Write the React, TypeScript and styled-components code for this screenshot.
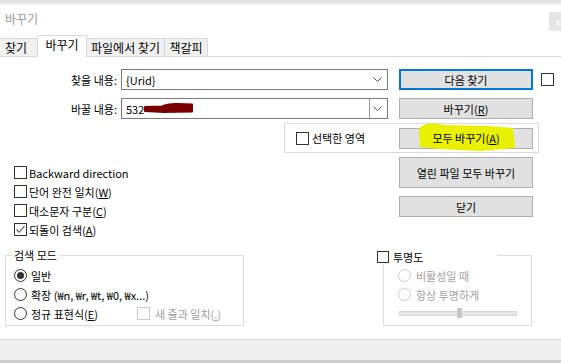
import * as React from 'react';
import styled, { createGlobalStyle } from 'styled-components';

const GlobalStyle = createGlobalStyle`
	html, body {
		margin: 0;
		padding: 0;
		background: #fff;
	}
	body {
		font-family: "Noto Sans CJK KR", "Noto Sans", sans-serif;
		font-size: 11px;
		color: #000;
	}
	* {
		box-sizing: border-box;
	}
`;

const Check: React.FunctionComponent<{ checked?: boolean; disabled?: boolean; size?: number }> = ({ checked, disabled, size = 13 }) => (
	<Box $disabled={disabled} $size={size}>
		{checked && (
			<svg width="11" height="11" viewBox="0 0 11 11">
				<polyline points="1.5,5.5 4.2,8.3 9.5,2.2" fill="none" stroke="#555" strokeWidth="1.1" />
			</svg>
		)}
	</Box>
);

const Radio: React.FunctionComponent<{ checked?: boolean; disabled?: boolean }> = ({ checked, disabled }) => (
	<Circle $disabled={disabled}>{checked && <Dot />}</Circle>
);

const Chevron = () => (
	<svg width="9" height="5" viewBox="0 0 9 5">
		<polyline points="0.5,0.5 4.5,4.5 8.5,0.5" fill="none" stroke="#555" strokeWidth="1" />
	</svg>
);

export default function App() {
	return (
		<>
			<GlobalStyle />
			<Window>
				<TopEdge />
				<TitleBar>
					<Title>바꾸기</Title>
					<CloseBox>x</CloseBox>
				</TitleBar>

				<TabStrip>
					<Tab $width={44} $first>찾기</Tab>
					<Tab $width={50} $active>바꾸기</Tab>
					<Tab $width={79}>파일에서 찾기</Tab>
					<Tab $width={44}>책갈피</Tab>
				</TabStrip>

				<FieldRow $top={12}>
					<FieldLabel>찾을 내용:</FieldLabel>
					<Combo>
						<ComboText>{'{Urid}'}</ComboText>
						<ComboArrow><Chevron /></ComboArrow>
					</Combo>
					<ActionButton $height={21} $primary>다음 찾기</ActionButton>
					<SideCheck><Check /></SideCheck>
				</FieldRow>

				<FieldRow $top={8}>
					<FieldLabel>바꿀 내용:</FieldLabel>
					<Combo>
						<ComboText>
							532
							<Redaction width="50" height="12" viewBox="0 0 50 12">
								<path
									d="M1 5 L18 4.5 Q24 1.5 34 2 L48 2.5 L48 9.5 L20 10 L1 9 Z"
									fill="#7a0000"
									stroke="#7a0000"
									strokeWidth="2"
									strokeLinejoin="round"
								/>
							</Redaction>
						</ComboText>
						<ComboArrow $split><Chevron /></ComboArrow>
					</Combo>
					<ActionButton $height={21}>바꾸기(<u>R</u>)</ActionButton>
				</FieldRow>

				<SelectionGroup>
					<CheckRow $gap={3}>
						<Check />
						<span>선택한 영역</span>
					</CheckRow>
					<ActionButton $height={21}>
						<Highlight width="98" height="29" viewBox="0 0 98 29">
							<path d="M1 7 C3 1, 12 -1, 24 2 L70 3 L95 5 L97 25 L62 28 L22 26 L2 24 Z" fill="#e9f000" />
						</Highlight>
						<ButtonLabel>모두 바꾸기(<u>A</u>)</ButtonLabel>
					</ActionButton>
				</SelectionGroup>

				<Middle>
					<OptionList>
						<CheckRow $gap={2}>
							<Check />
							<span>Backward direction</span>
						</CheckRow>
						<CheckRow $gap={2}>
							<Check />
							<span>단어 완전 일치(<u>W</u>)</span>
						</CheckRow>
						<CheckRow $gap={2}>
							<Check />
							<span>대소문자 구분(<u>C</u>)</span>
						</CheckRow>
						<CheckRow $gap={2}>
							<Check checked />
							<span>되돌이 검색(<u>A</u>)</span>
						</CheckRow>
					</OptionList>
					<ButtonStack>
						<ActionButton $height={31}>열린 파일 모두 바꾸기</ActionButton>
						<ActionButton $height={21}>닫기</ActionButton>
					</ButtonStack>
				</Middle>

				<GroupsRow>
					<GroupBox $left={5} $width={239}>
						<Legend>검색 모드</Legend>
						<CheckRow $gap={4}>
							<Radio checked />
							<span>일반</span>
						</CheckRow>
						<CheckRow $gap={4}>
							<Radio />
							<span>확장 (₩n, ₩r, ₩t, ₩0, ₩x...)</span>
						</CheckRow>
						<CheckRow $gap={4}>
							<RadioSlot>
								<Radio />
								<span>정규 표현식(<u>E</u>)</span>
							</RadioSlot>
							<Check disabled />
							<Muted>새 줄과 일치(<u>.</u>)</Muted>
						</CheckRow>
					</GroupBox>

					<GroupBox $left={139} $width={149} $inset={14}>
						<CheckLegend>
							<Check size={12} />
							<span>투명도</span>
						</CheckLegend>
						<CheckRow $gap={4}>
							<Radio disabled />
							<Muted>비활성일 때</Muted>
						</CheckRow>
						<CheckRow $gap={4}>
							<Radio disabled />
							<Muted>항상 투명하게</Muted>
						</CheckRow>
						<SliderTrack>
							<SliderThumb style={{ left: `${0.5 * 118 - 2}px` }} />
						</SliderTrack>
					</GroupBox>
				</GroupsRow>

				<Footer />
			</Window>
		</>
	);
}

const Window = styled.div`
	position: relative;
	width: 561px;
	height: 363px;
	overflow: hidden;
	display: flex;
	flex-direction: column;
	background: #fff;
`;

const TopEdge = styled.div`
	height: 5px;
	background: linear-gradient(#dedede, #ededed);
	border-bottom: 1px solid #f2f2f2;
`;

const TitleBar = styled.div`
	height: 30px;
	display: flex;
	justify-content: space-between;
	align-items: flex-start;
`;

const Title = styled.div`
	padding-left: 5px;
	line-height: 28px;
	color: #9a9a9a;
	font-size: 12px;
`;

const CloseBox = styled.div`
	width: 18px;
	height: 19px;
	margin-top: 7px;
	margin-right: -6px;
	background: #e6e6e6;
	color: #fff;
	font-size: 11px;
	line-height: 18px;
	text-align: center;
`;

const TabStrip = styled.div`
	height: 22px;
	display: flex;
	align-items: flex-end;
	border-bottom: 1px solid #d9d9d9;
`;

const Tab = styled.div<{ $width: number; $active?: boolean; $first?: boolean }>`
	position: relative;
	width: ${p => p.$width}px;
	height: ${p => p.$active ? 22 : 18}px;
	margin-left: ${p => p.$first ? -6 : 0}px;
	margin-right: -1px;
	margin-bottom: ${p => p.$active ? -1 : 0}px;
	z-index: ${p => p.$active ? 1 : 0};
	border: 1px solid #d9d9d9;
	border-bottom: none;
	background: ${p => p.$active ? '#fff' : '#f0f0f0'};
	text-align: center;
	font-size: 12px;
	line-height: ${p => p.$active ? 18 : 17}px;
	white-space: nowrap;
`;

const FieldRow = styled.div<{ $top: number }>`
	display: flex;
	align-items: center;
	height: 21px;
	margin-top: ${p => p.$top}px;
`;

const FieldLabel = styled.div`
	width: 117px;
	margin-right: 4px;
	text-align: right;
	white-space: nowrap;
`;

const Combo = styled.div`
	width: 267px;
	height: 21px;
	display: flex;
	align-items: center;
	border: 1px solid #7a7a7a;
	padding-left: 4px;
	margin-right: 11px;
`;

const ComboText = styled.div`
	flex: 1;
	display: flex;
	align-items: center;
	white-space: nowrap;
`;

const Redaction = styled.svg`
	margin-left: 0;
	margin-top: -1px;
`;

const ComboArrow = styled.div<{ $split?: boolean }>`
	width: 16px;
	height: 100%;
	display: flex;
	align-items: center;
	justify-content: center;
	border-left: ${p => p.$split ? '1px solid #9a9a9a' : 'none'};
	margin-right: 2px;
`;

const ActionButton = styled.div<{ $height: number; $primary?: boolean }>`
	position: relative;
	width: 134px;
	height: ${p => p.$height}px;
	flex-shrink: 0;
	display: flex;
	align-items: center;
	justify-content: center;
	background: #e1e1e1;
	border: ${p => p.$primary ? '2px solid #0078d7' : '1px solid #adadad'};
	white-space: nowrap;
`;

const ButtonLabel = styled.span`
	position: relative;
	z-index: 1;
`;

const Highlight = styled.svg`
	position: absolute;
	left: 18px;
	top: -6px;
	z-index: 0;
`;

const SideCheck = styled.div`
	margin-left: 8px;
	display: flex;
`;

const SelectionGroup = styled.div`
	width: 255px;
	height: 30px;
	margin: 4px 0 0 284px;
	padding: 0 5px 0 11px;
	display: flex;
	align-items: center;
	justify-content: space-between;
	border: 1px solid #dcdcdc;
`;

const CheckRow = styled.div<{ $gap: number }>`
	display: flex;
	align-items: center;
	height: 19px;
	gap: ${p => p.$gap}px;
	white-space: nowrap;
`;

const Box = styled.div<{ $disabled?: boolean; $size: number }>`
	width: ${p => p.$size}px;
	height: ${p => p.$size}px;
	flex-shrink: 0;
	display: flex;
	align-items: center;
	justify-content: center;
	background: #fff;
	border: 1px solid ${p => p.$disabled ? '#cccccc' : '#333'};
`;

const Circle = styled.div<{ $disabled?: boolean }>`
	width: 13px;
	height: 13px;
	flex-shrink: 0;
	display: flex;
	align-items: center;
	justify-content: center;
	border-radius: 50%;
	background: #fff;
	border: 1px solid ${p => p.$disabled ? '#cccccc' : '#333'};
`;

const Dot = styled.div`
	width: 7px;
	height: 7px;
	border-radius: 50%;
	background: #333;
`;

const Middle = styled.div`
	display: flex;
`;

const OptionList = styled.div`
	width: 399px;
	padding: 10px 0 0 14px;
`;

const ButtonStack = styled.div`
	display: flex;
	flex-direction: column;
	gap: 8px;
	margin-top: 4px;
`;

const GroupsRow = styled.div`
	display: flex;
	margin-top: 16px;
`;

const GroupBox = styled.div<{ $left: number; $width: number; $inset?: number }>`
	position: relative;
	width: ${p => p.$width}px;
	height: 71px;
	margin-left: ${p => p.$left}px;
	padding: 10px 0 0 ${p => p.$inset ?? 8}px;
	border: 1px solid #dcdcdc;
`;

const Legend = styled.div`
	position: absolute;
	left: 6px;
	top: -9px;
	padding: 0 2px;
	background: #fff;
	line-height: 16px;
`;

const CheckLegend = styled.div`
	position: absolute;
	left: -7px;
	top: -6px;
	width: 120px;
	height: 14px;
	display: flex;
	align-items: center;
	gap: 4px;
	background: #fff;
`;

const RadioSlot = styled.div`
	width: 119px;
	display: flex;
	align-items: center;
	gap: 4px;
`;

const Muted = styled.span`
	color: #a0a0a0;
	margin-left: 1px;
`;

const SliderTrack = styled.div`
	position: relative;
	width: 118px;
	height: 5px;
	margin: 7px 0 0 1px;
	background: #e7e7e7;
	border: 1px solid #d6d6d6;
`;

const SliderThumb = styled.div`
	position: absolute;
	top: -4px;
	width: 5px;
	height: 10px;
	background: #c6c6c6;
`;

const Footer = styled.div`
	margin-top: auto;
	height: 24px;
	background: #f0f0f0;
	border-top: 1px solid #d9d9d9;
	border-bottom: 3px solid #cdcdcd;
`;
